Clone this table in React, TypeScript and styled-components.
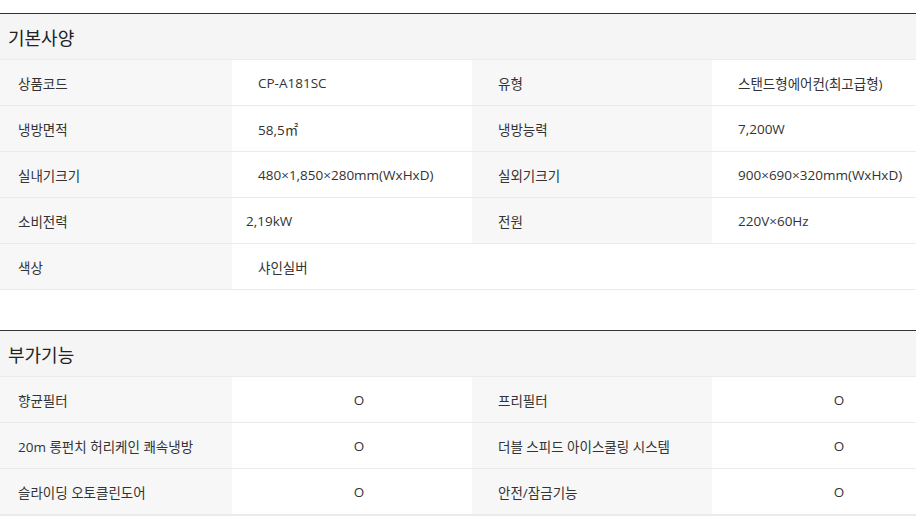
import { Fragment } from "react";
import styled, { createGlobalStyle } from "styled-components";

const GlobalStyle = createGlobalStyle`
  html, body {
    margin: 0;
    padding: 0;
    background: #fff;
  }
  body {
    font-family: "Open Sans", "Noto Sans CJK KR", sans-serif;
    color: #333;
  }
`;

const Page = styled.div`
  width: 916px;
  overflow: hidden;
  padding-top: 13px;
`;

const Section = styled.section`
  width: 960px;
  margin-left: -8px;
  margin-bottom: 40px;
`;

const Title = styled.h2`
  margin: 0;
  height: 45px;
  display: flex;
  align-items: center;
  padding-left: 16px;
  background: #f5f5f5;
  border-top: 1px solid #333;
  border-bottom: 1px solid #ebebeb;
  font-size: 18px;
  font-weight: 400;
  color: #222;
`;

const Table = styled.table<{ $last?: boolean }>`
  width: 960px;
  border-collapse: collapse;
  table-layout: fixed;
  border-bottom: ${(p) => (p.$last ? "2px solid #ebebeb" : "none")};
`;

const Th = styled.th`
  height: 45px;
  padding: 0 0 0 26px;
  background: #f7f7f7;
  border-bottom: 1px solid #ebebeb;
  text-align: left;
  font-size: 13.5px;
  font-weight: 400;
  color: #333;
`;

const Td = styled.td<{ $indent?: number; $center?: boolean }>`
  height: 45px;
  padding: 0 0 0 ${(p) => (p.$center ? 14 : p.$indent ?? 26)}px;
  background: #fff;
  border-bottom: 1px solid #ebebeb;
  text-align: ${(p) => (p.$center ? "center" : "left")};
  font-size: 13.5px;
  color: #333;
`;

type Pair = [string, string, number?];

const specs: Pair[][] = [
  [["상품코드", "CP-A181SC"], ["유형", "스탠드형에어컨(최고급형)"]],
  [["냉방면적", "58,5㎡"], ["냉방능력", "7,200W"]],
  [["실내기크기", "480×1,850×280mm(WxHxD)"], ["실외기크기", "900×690×320mm(WxHxD)"]],
  [["소비전력", "2,19kW", 14], ["전원", "220V×60Hz"]],
];

const extras: [string, string][] = [
  ["향균필터", "프리필터"],
  ["20m 롱펀치 허리케인 쾌속냉방", "더블 스피드 아이스쿨링 시스템"],
  ["슬라이딩 오토클린도어", "안전/잠금기능"],
];

function Cols() {
  return (
    <colgroup>
      <col style={{ width: 240 }} />
      <col style={{ width: 240 }} />
      <col style={{ width: 240 }} />
      <col style={{ width: 240 }} />
    </colgroup>
  );
}

export default function App() {
  return (
    <Page>
      <GlobalStyle />
      <Section>
        <Title>기본사양</Title>
        <Table>
          <Cols />
          <tbody>
            {specs.map((row, i) => (
              <tr key={i}>
                {row.map(([label, value, indent]) => (
                  <Fragment key={label}>
                    <Th>{label}</Th>
                    <Td $indent={indent}>{value}</Td>
                  </Fragment>
                ))}
              </tr>
            ))}
            <tr>
              <Th>색상</Th>
              <Td colSpan={3}>샤인실버</Td>
            </tr>
          </tbody>
        </Table>
      </Section>
      <Section>
        <Title>부가기능</Title>
        <Table $last>
          <Cols />
          <tbody>
            {extras.map(([a, b]) => (
              <tr key={a}>
                <Th>{a}</Th>
                <Td $center>O</Td>
                <Th>{b}</Th>
                <Td $center>O</Td>
              </tr>
            ))}
          </tbody>
        </Table>
      </Section>
    </Page>
  );
}
